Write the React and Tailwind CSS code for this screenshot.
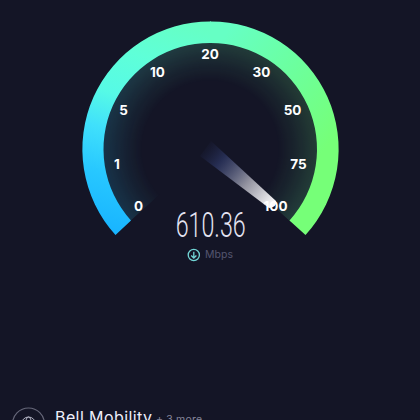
const labels = [
  ['0', 138.5, 206], ['1', 117, 164], ['5', 123.5, 110.5], ['10', 157.5, 72.5], ['20', 210, 54.5],
  ['30', 261.5, 72.5], ['50', 292.5, 110.5], ['75', 298.5, 164], ['100', 275.5, 206],
];

function Gauge() {
  return (
    <svg className="block h-[276px] w-[420px] shrink-0" viewBox="0 0 420 276">
      <defs>
        <linearGradient id="left" gradientUnits="userSpaceOnUse" x1="118" y1="235" x2="184" y2="22">
          <stop offset="0" stopColor="#18b4ff" />
          <stop offset="0.25" stopColor="#28c8ff" />
          <stop offset="0.44" stopColor="#40e0fb" />
          <stop offset="0.6" stopColor="#56fae6" />
          <stop offset="0.8" stopColor="#5fffd8" />
          <stop offset="1" stopColor="#66ffc4" />
        </linearGradient>
        <linearGradient id="right" gradientUnits="userSpaceOnUse" x1="206" y1="60" x2="325" y2="150">
          <stop offset="0" stopColor="#66ffc4" />
          <stop offset="0.5" stopColor="#6cff9e" />
          <stop offset="1" stopColor="#76ff78" />
        </linearGradient>
        <radialGradient id="fade" gradientUnits="userSpaceOnUse" cx="210.5" cy="149" r="107">
          <stop offset="0.63" stopColor="#fff" stopOpacity="0" />
          <stop offset="0.8" stopColor="#fff" stopOpacity="0.07" />
          <stop offset="1" stopColor="#fff" stopOpacity="0.17" />
        </radialGradient>
        <linearGradient id="glow" gradientUnits="userSpaceOnUse" x1="105" y1="200" x2="316" y2="130">
          <stop offset="0" stopColor="#20c0ff" />
          <stop offset="0.45" stopColor="#60ffd0" />
          <stop offset="1" stopColor="#70ff80" />
        </linearGradient>
        <mask id="ring" maskUnits="userSpaceOnUse" x="0" y="0" width="420" height="276">
          <circle cx="210.5" cy="149" r="109" fill="url(#fade)" />
        </mask>
        <linearGradient id="needle" gradientUnits="userSpaceOnUse" x1="203" y1="146" x2="274" y2="206">
          <stop offset="0" stopColor="#222b55" stopOpacity="0" />
          <stop offset="0.25" stopColor="#303b6b" stopOpacity="0.65" />
          <stop offset="0.62" stopColor="#92929f" />
          <stop offset="1" stopColor="#fff" />
        </linearGradient>
      </defs>
      <g transform="translate(-.5 0)">
        <path d="M129 222.5A109 109 0 1 1 292 222.5L210.5 149Z" fill="url(#glow)" mask="url(#ring)" />
        <path d="M116 235A127.7 127.7 0 0 1 211.5 21.5V43A106.2 106.2 0 0 0 131.5 220.5Z" fill="url(#left)" />
        <path d="M210.5 21.5A127.7 127.7 0 0 1 306 235L290 220.5A106.2 106.2 0 0 0 210.5 43Z" fill="url(#right)" />
      </g>
      <path d="M211 141L276 201Q277 207 269 208L200 156Z" fill="url(#needle)" />
      <g fill="#fff" textAnchor="middle" className="font-[Inter,sans-serif] text-[13.5px] font-bold">
        {labels.map(([text, x, y]) => <text key={text} x={x} y={y + 4.5}>{text}</text>)}
      </g>
      <text transform="translate(175.7 236.5) scale(.645 1)" fill="#e4e4f2" className="font-[Roboto,sans-serif] text-[36px] font-light">610.36</text>
      <g fill="none" stroke="#72d5d5" strokeWidth="1.3">
        <circle cx="193.8" cy="255" r="5.6" />
        <path d="M193.8 251.8V258M191.2 255.5L193.8 258L196.4 255.5" />
      </g>
      <text x="205" y="258.3" fill="#55566f" textLength="28" className="font-[Inter,sans-serif] text-[10.5px]">Mbps</text>
    </svg>
  );
}

export default function App() {
  return (
    <main className="flex h-[420px] w-[420px] flex-col overflow-hidden bg-[#141526]">
      <Gauge />
      <footer className="mt-[131px] flex shrink-0 items-start pl-3">
        <svg className="h-[34px] w-[34px]" viewBox="0 0 34 34" fill="none" stroke="#666779">
          <circle cx="16.5" cy="17" r="16" strokeWidth="1.2" />
          <g stroke="#b5b6c6"><circle cx="16.5" cy="17" r="7" /><ellipse cx="16.5" cy="17" rx="3" ry="7" /><path d="M9.5 17h14" /></g>
        </svg>
        <svg className="h-[34px] w-[180px]" viewBox="0 0 180 34">
          <text x="9" y="15.5" fill="#eeeefa" textLength="97" className="font-[Inter,sans-serif] text-[16px]">Bell Mobility</text>
          <text x="110" y="15.5" fill="#85869a" textLength="46" className="font-[Inter,sans-serif] text-[10.5px]">+ 3 more</text>
        </svg>
      </footer>
    </main>
  );
}
